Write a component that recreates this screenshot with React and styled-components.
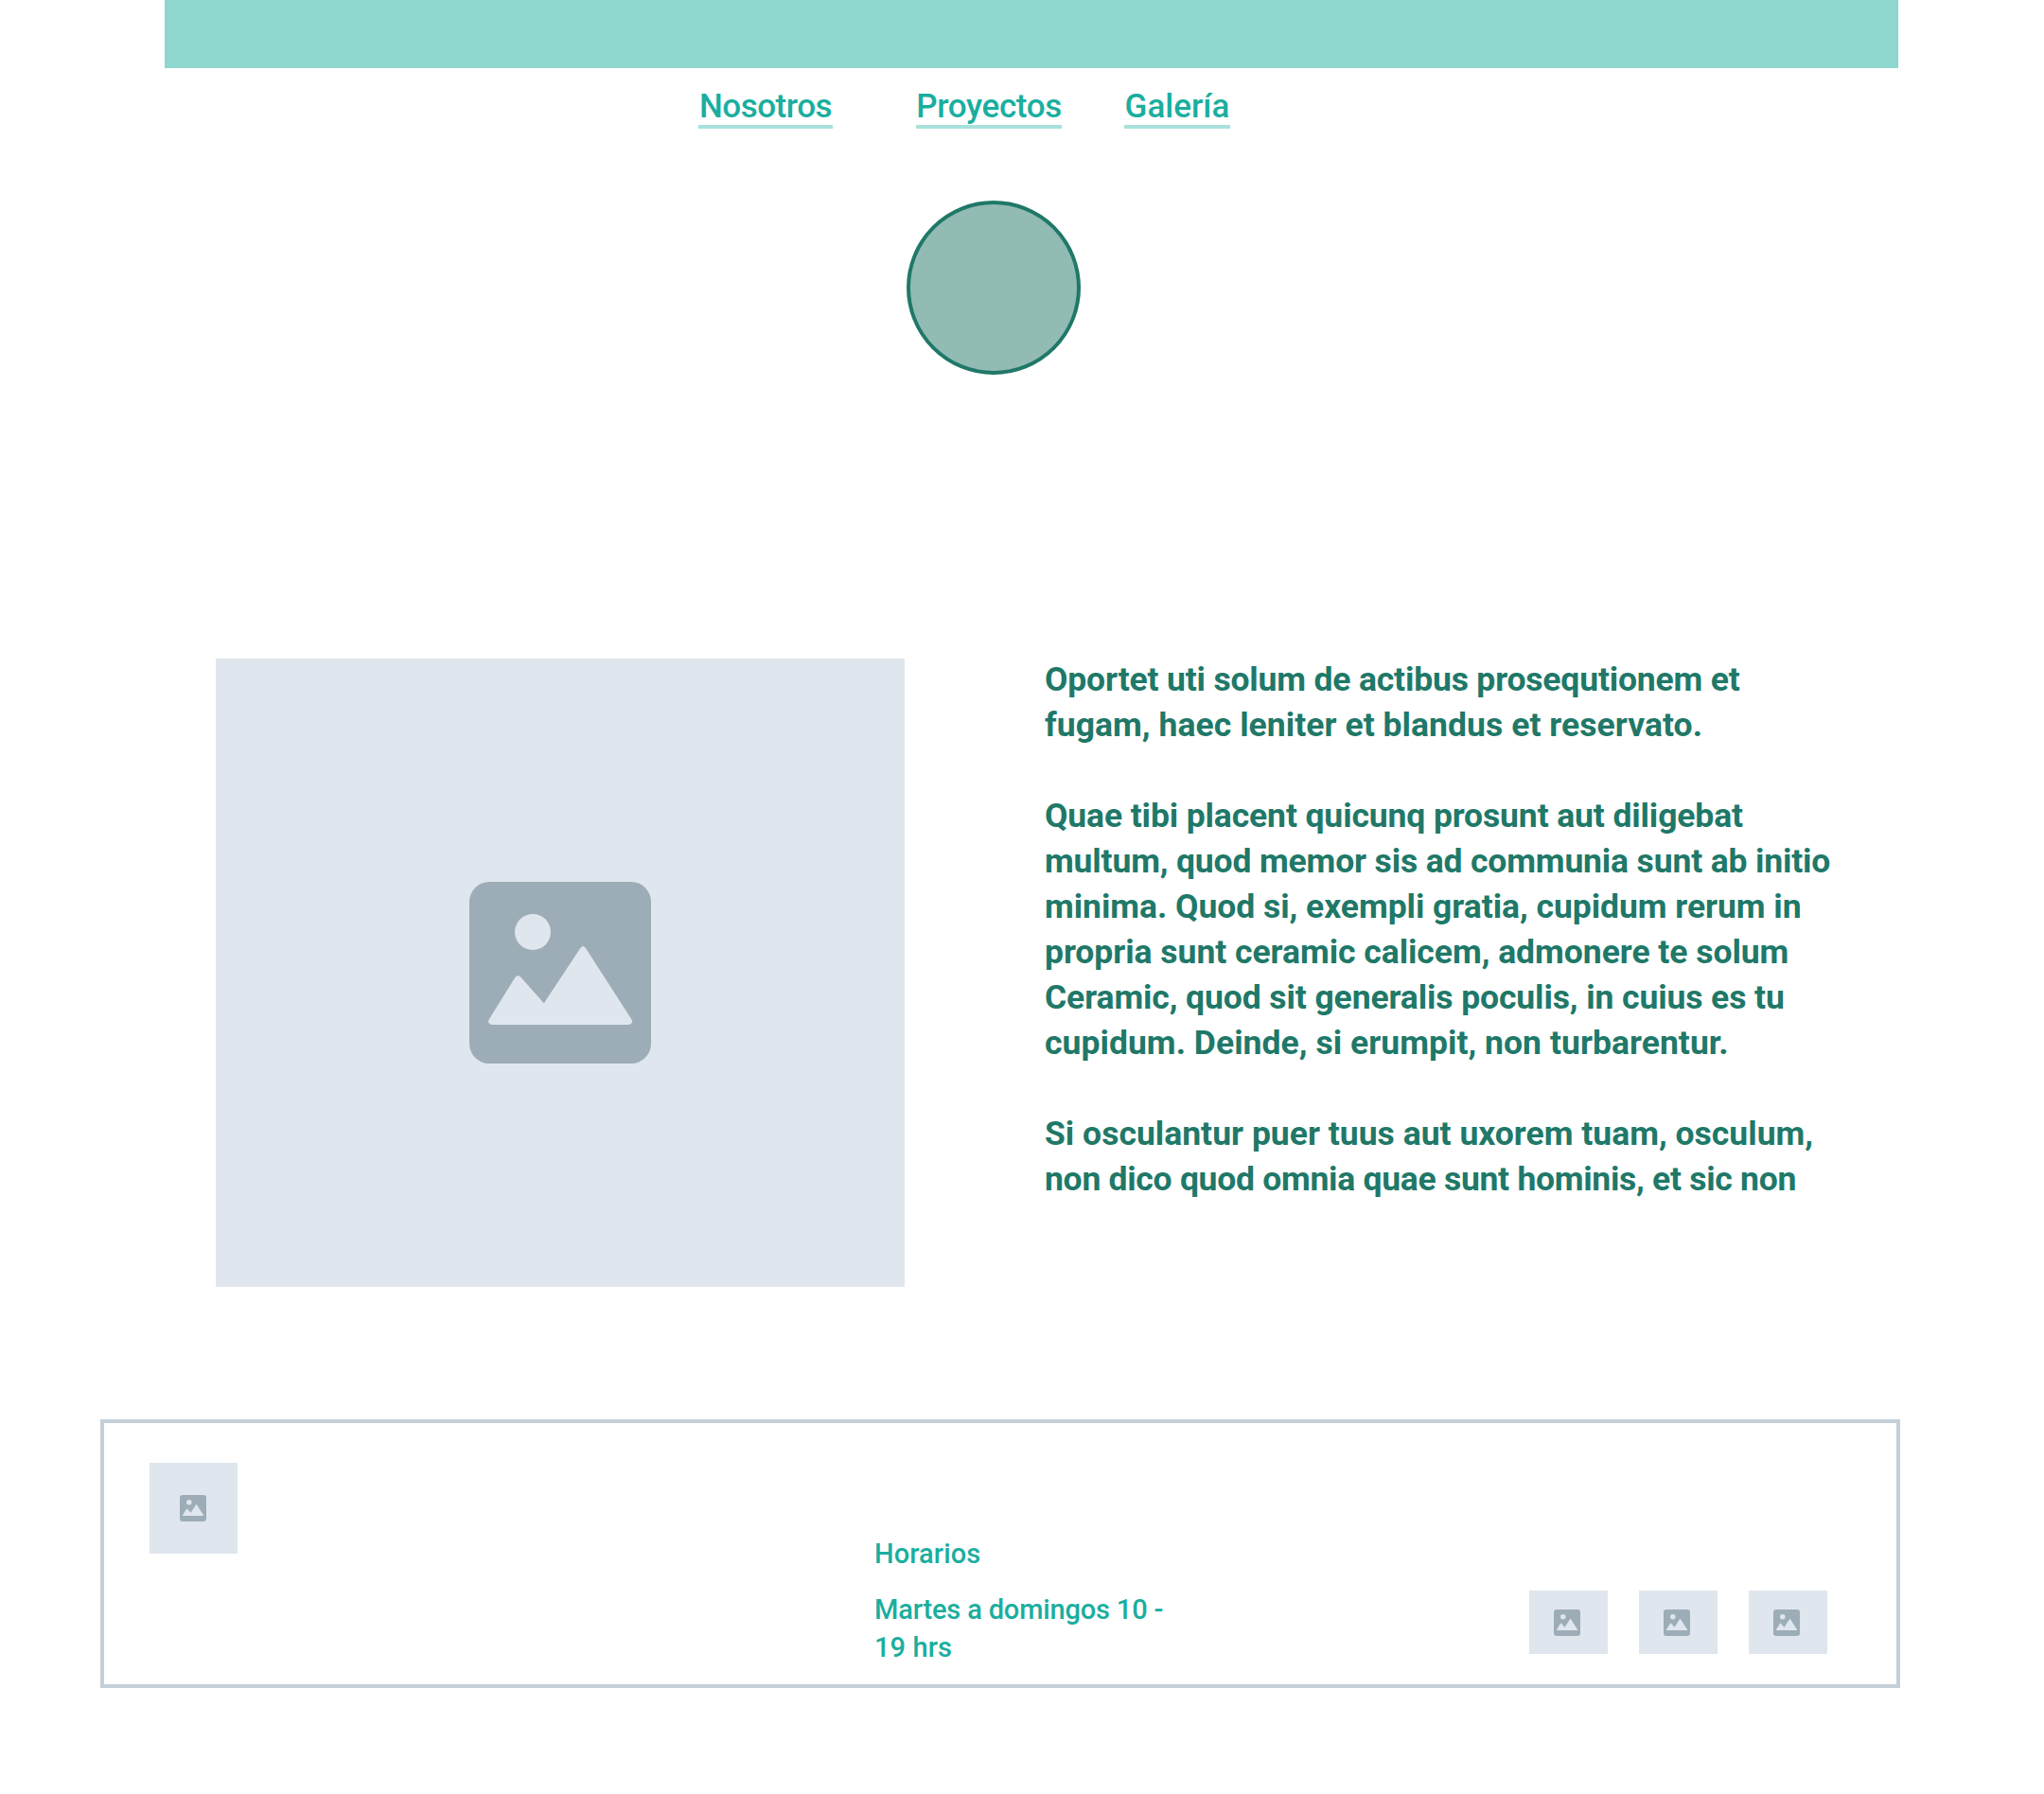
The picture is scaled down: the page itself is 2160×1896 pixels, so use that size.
import React from "react";
import styled, { createGlobalStyle } from "styled-components";

const color = {
  teal: "#1aae9f",
  banner: "#8dd7cf",
  underline: "#a8e1db",
  green: "#207868",
  avatar: "#91bbb3",
  panel: "#dfe6ed",
  icon: "#9dadb8",
  border: "#c3cfd9",
};

const GlobalStyle = createGlobalStyle`
  * { box-sizing: border-box; }
  body {
    margin: 0;
    background: #ffffff;
    font-family: Roboto, "Liberation Sans", sans-serif;
  }
`;

const Page = styled.div`
  width: 2160px;
  height: 1896px;
  display: flex;
  flex-direction: column;
  align-items: flex-start;
  overflow: hidden;
`;

const Banner = styled.header`
  width: 1832px;
  height: 72px;
  margin-left: 174px;
  background: ${color.banner};
`;

const Nav = styled.nav`
  display: flex;
  margin: 20px 0 0 738px;
`;

const NavLink = styled.a`
  width: ${(p) => p.$width}px;
  height: 44px;
  margin-right: ${(p) => p.$after || 0}px;
  border-bottom: 4px solid ${color.underline};
  color: ${color.teal};
  font-size: 35px;
  font-weight: 500;
  line-height: 42px;
  letter-spacing: ${(p) => p.$tracking}px;
  text-align: center;
  white-space: nowrap;
`;

const Avatar = styled.div`
  width: 184px;
  height: 184px;
  margin: 76px 0 0 958px;
  border: 4px solid ${color.green};
  border-radius: 50%;
  background: ${color.avatar};
`;

const Main = styled.main`
  display: flex;
  align-items: flex-start;
  margin: 298px 0 0 228px;
`;

const Placeholder = styled.div`
  display: flex;
  flex: none;
  align-items: center;
  justify-content: center;
  width: ${(p) => p.$width}px;
  height: ${(p) => p.$height}px;
  padding-right: ${(p) => p.$shift || 0}px;
  background: ${color.panel};
`;

const Photo = styled(Placeholder)`
  margin-top: 2px;
`;

const Icon = styled.svg`
  display: block;
  flex: none;
  width: ${(p) => p.$size}px;
  height: ${(p) => p.$size}px;
`;

const Article = styled.article`
  display: flex;
  flex-direction: column;
  gap: 48px;
  margin-left: 148px;
`;

const Paragraph = styled.p`
  margin: 0;
  color: ${color.green};
  font-size: 35.5px;
  font-weight: 700;
  line-height: 48px;
`;

const Line = styled.span`
  display: block;
  white-space: nowrap;
  letter-spacing: ${(p) => p.$tracking}px;
`;

const Footer = styled.footer`
  display: flex;
  align-items: flex-start;
  width: 1902px;
  height: 284px;
  margin: 140px 0 0 106px;
  padding: 42px 0 0 48px;
  border: 4px solid ${color.border};
`;

const Hours = styled.section`
  width: 320px;
  margin: 76px 0 0 673px;
  color: ${color.teal};
  font-size: 29px;
  font-weight: 500;
  line-height: 40px;
`;

const HoursTitle = styled.h2`
  margin: 0 0 19px;
  font: inherit;
  letter-spacing: 0.1px;
`;

const HoursText = styled.p`
  margin: 0;
`;

const Socials = styled.div`
  display: flex;
  gap: 33px;
  margin: 135px 0 0 372px;
`;

function PictureIcon({ size }) {
  return (
    <Icon viewBox="0 0 192 192" $size={size} aria-hidden="true">
      <rect width="192" height="192" rx="21" fill={color.icon} />
      <circle cx="67" cy="53" r="19" fill={color.panel} />
      <path
        fill={color.panel}
        d="M24 151Q21.500 151 20.500 149Q19.500 147.500 20.700 145.500L48 101.500Q51 96.500 55 101.500L78.800 128.200L117 70.500Q120 65.500 123.200 70.500L171.500 145.500Q172.800 147.500 171.500 149.200Q170.300 151 168 151Z"
      />
    </Icon>
  );
}

const links = [
  { label: "Nosotros", width: 142, after: 88, tracking: -0.5 },
  { label: "Proyectos", width: 154, after: 66, tracking: -0.36 },
  { label: "Galería", width: 112, tracking: 0 },
];

const paragraphs = [
  [
    ["Oportet uti solum de actibus prosequtionem et", -0.174],
    ["fugam, haec leniter et blandus et reservato.", 0.05],
  ],
  [
    ["Quae tibi placent quicunq prosunt aut diligebat", -0.124],
    ["multum, quod memor sis ad communia sunt ab initio", -0.155],
    ["minima. Quod si, exempli gratia, cupidum rerum in", -0.04],
    ["propria sunt ceramic calicem, admonere te solum", -0.039],
    ["Ceramic, quod sit generalis poculis, in cuius es tu", -0.103],
    ["cupidum. Deinde, si erumpit, non turbarentur.", 0.04],
  ],
  [
    ["Si osculantur puer tuus aut uxorem tuam, osculum,", 0.01],
    ["non dico quod omnia quae sunt hominis, et sic non", -0.28],
  ],
];

export default function App() {
  return (
    <Page>
      <GlobalStyle />
      <Banner />
      <Nav>
        {links.map((l) => (
          <NavLink key={l.label} $width={l.width} $after={l.after} $tracking={l.tracking}>
            {l.label}
          </NavLink>
        ))}
      </Nav>
      <Avatar />
      <Main>
        <Photo $width={728} $height={664}>
          <PictureIcon size={192} />
        </Photo>
        <Article>
          {paragraphs.map((lines, i) => (
            <Paragraph key={i}>
              {lines.map(([text, tracking]) => (
                <Line key={text} $tracking={tracking}>
                  {text}
                </Line>
              ))}
            </Paragraph>
          ))}
        </Article>
      </Main>
      <Footer>
        <Placeholder $width={93} $height={96} $shift={1}>
          <PictureIcon size={28} />
        </Placeholder>
        <Hours>
          <HoursTitle>Horarios</HoursTitle>
          <HoursText>
            <Line $tracking={-0.162}>Martes a domingos 10 -</Line>
            <Line $tracking={0.09}>19 hrs</Line>
          </HoursText>
        </Hours>
        <Socials>
          {[0, 1, 2].map((n) => (
            <Placeholder key={n} $width={83} $height={67} $shift={3}>
              <PictureIcon size={28} />
            </Placeholder>
          ))}
        </Socials>
      </Footer>
    </Page>
  );
}
